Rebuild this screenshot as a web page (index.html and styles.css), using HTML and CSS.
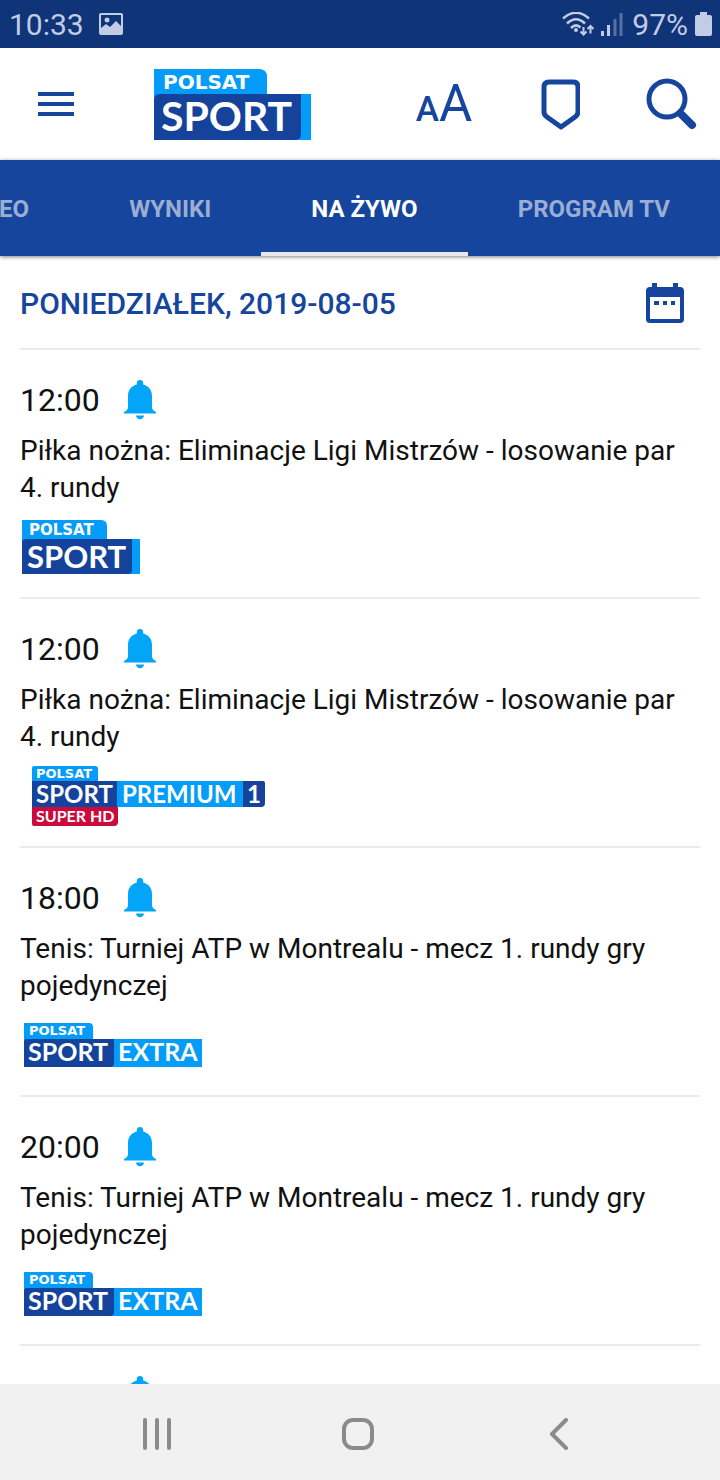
FILE: index.html
```html
<!DOCTYPE html>
<html lang="pl">
<head>
  <meta charset="UTF-8">
  <meta name="viewport" content="width=device-width, initial-scale=1.0">
  <title>Polsat Sport - Na żywo</title>
  <link rel="stylesheet" href="styles.css">
</head>
<body>

  <!-- Shared symbols -->
  <svg class="symbols" aria-hidden="true">
    <symbol id="bell" viewBox="0 0 32 40">
      <path d="M16 0c2 0 3.200 1.300 3.200 3v1.500C25 6 28 10.500 28 16v11c0 2.500 1.500 3.800 4 5v1.500H0V32c2.500-1.200 4-2.500 4-5V16C4 10.500 7 6 12.800 4.500V3C12.800 1.300 14 0 16 0z"/>
      <path d="M12 35.500h8c0 2-1.600 3.700-4 3.700s-4-1.700-4-3.700z"/>
    </symbol>
  </svg>

  <div class="status-bar">
    <span>10:33</span>
    <svg class="picture-icon" width="24" height="22" viewBox="0 0 24 22">
      <path fill-rule="evenodd" d="M2 0h20q2 0 2 2v18q0 2-2 2H2q-2 0-2-2V2q0-2 2-2zM2 2v13l5-4 4 3 6-6 5 5V2zM8 4.500a2.500 2.500 0 1 1 0 5 2.500 2.500 0 0 1 0-5z"/>
    </svg>
    <div class="status-right">
      <svg width="32" height="24" viewBox="0 0 32 24">
        <g fill="none" stroke="currentColor" stroke-width="2.500">
          <path d="M1 6.500Q14-5 27 6.500M5 11.500Q14 3 23 11.500M9 16Q14 11 18.500 15.500"/>
          <path stroke-width="2" d="M21.500 15v7M18.500 19.500l3 3 3-3M28.500 21.500v-7M25.500 17l3-3 3 3"/>
        </g>
        <circle cx="14" cy="18" r="2"/>
      </svg>
      <svg width="22" height="24" viewBox="0 0 22 24">
        <path d="M0 19h3v5H0zM6 13h3v11H6z"/>
        <path opacity="0.400" d="M12.500 7h3v17h-3zM18.500 1h3v23h-3z"/>
      </svg>
      <span class="percent">97%</span>
      <svg width="17" height="24" viewBox="0 0 17 24">
        <path d="M5 0h7v3h3q2 0 2 2v17q0 2-2 2H2q-2 0-2-2V5q0-2 2-2h3z"/>
      </svg>
    </div>
  </div>

  <header class="header">
    <button class="menu-button" aria-label="Menu">
      <svg width="36" height="24" viewBox="0 0 36 24"><path d="M0 0h36v4H0zM0 10h36v4H0zM0 20h36v4H0z"/></svg>
    </button>
    <a class="home-link" href="#" aria-label="Polsat Sport">
      <svg width="157" height="71" viewBox="0 0 157 71">
        <path class="light" d="M0 0h105q8 0 8 8v17h44v46H0z"/>
        <path class="dark" d="M6 25h141v40q0 6-6 6H0V31q0-6 6-6z"/>
        <text class="brand" x="9" y="20" font-size="20">POLSAT</text>
        <text class="name" x="7" y="62" font-size="41">SPORT</text>
      </svg>
    </a>
    <div class="actions">
      <button class="text-size" aria-label="Rozmiar tekstu"><span class="small-a">A</span><span class="big-a">A</span></button>
      <button aria-label="Kluby">
        <svg width="40" height="52" viewBox="0 0 40 52">
          <path fill="none" stroke="currentColor" stroke-width="5" stroke-linejoin="round" d="M9 4h24q5 0 5 5v25q0 3-3 5L21 49 7 39q-3-2-3-5V9q0-5 5-5z"/>
        </svg>
      </button>
      <button class="search-button" aria-label="Szukaj">
        <svg width="52" height="52" viewBox="0 0 52 52">
          <g fill="none" stroke="currentColor">
            <circle cx="21" cy="21" r="18" stroke-width="5"/>
            <path stroke-width="5" d="M33 34l4 4"/>
            <path stroke-width="8" stroke-linecap="round" d="M36 37l10 10"/>
          </g>
        </svg>
      </button>
    </div>
  </header>

  <nav class="tabs">
    <a class="tab" href="#">WIDEO</a>
    <a class="tab" href="#">WYNIKI</a>
    <a class="tab active" href="#">NA ŻYWO</a>
    <a class="tab" href="#">PROGRAM TV</a>
  </nav>

  <main class="schedule">
    <div class="date-row">
      <h1>PONIEDZIAŁEK, 2019-08-05</h1>
      <button aria-label="Wybierz datę">
        <svg width="38" height="40" viewBox="0 0 38 40">
          <path fill-rule="evenodd" d="M6 0h5v4h16V0h5v4h2q4 0 4 4v28q0 4-4 4H4q-4 0-4-4V8q0-4 4-4h2zM4 14v22h30V14z"/>
          <path d="M8 18h5v4H8zM17 18h4v4h-4zM25 18h4v4h-4z"/>
        </svg>
      </button>
    </div>

    <article class="event">
      <div class="event-time">
        <time>12:00</time>
        <button class="bell" aria-label="Przypomnij"><svg width="32" height="40"><use href="#bell"/></svg></button>
      </div>
      <p>Piłka nożna: Eliminacje Ligi Mistrzów - losowanie par 4. rundy</p>
      <div class="channel sport">
        <svg width="118" height="54" viewBox="0 0 118 54">
          <path class="light" d="M0 0h79q6 0 6 6v13h33v35H0z"/>
          <path class="dark" d="M4 19h106v31q0 4-4 4H0V23q0-4 4-4z"/>
          <text class="brand" x="7" y="15" font-size="15">POLSAT</text>
          <text class="name" x="5" y="48" font-size="31">SPORT</text>
        </svg>
      </div>
    </article>

    <article class="event">
      <div class="event-time">
        <time>12:00</time>
        <button class="bell" aria-label="Przypomnij"><svg width="32" height="40"><use href="#bell"/></svg></button>
      </div>
      <p>Piłka nożna: Eliminacje Ligi Mistrzów - losowanie par 4. rundy</p>
      <div class="channel premium">
        <svg width="233" height="60" viewBox="0 0 233 60">
          <path class="light" d="M2 0h61q3 0 3 3v12h148v26H0V2q0-2 2-2z"/>
          <path class="dark" d="M0 15h85v26H0zM211 15h20q2 0 2 2v20q0 4-4 4h-18z"/>
          <path class="red" d="M0 41h86v15q0 4-4 4H2q-2 0-2-2z"/>
          <text class="brand" x="4" y="12" font-size="13">POLSAT</text>
          <text class="name" x="4" y="37" font-size="24">SPORT</text>
          <text class="name" x="90" y="37" font-size="24">PREMIUM</text>
          <text class="name" x="215" y="37" font-size="24">1</text>
          <text class="name" x="4" y="56" font-size="16">SUPER HD</text>
        </svg>
      </div>
    </article>

    <article class="event">
      <div class="event-time">
        <time>18:00</time>
        <button class="bell" aria-label="Przypomnij"><svg width="32" height="40"><use href="#bell"/></svg></button>
      </div>
      <p>Tenis: Turniej ATP w Montrealu - mecz 1. rundy gry pojedynczej</p>
      <div class="channel extra">
        <svg width="178" height="44" viewBox="0 0 178 44">
          <path class="light" d="M0 0h65q4 0 4 4v12h109v28H0z"/>
          <path class="dark" d="M3 16h87v24q0 4-4 4H0V19q0-3 3-3z"/>
          <text class="brand" x="5" y="12" font-size="13">POLSAT</text>
          <text class="name" x="4" y="38" font-size="25">SPORT</text>
          <text class="name" x="94" y="38" font-size="25">EXTRA</text>
        </svg>
      </div>
    </article>

    <article class="event">
      <div class="event-time">
        <time>20:00</time>
        <button class="bell" aria-label="Przypomnij"><svg width="32" height="40"><use href="#bell"/></svg></button>
      </div>
      <p>Tenis: Turniej ATP w Montrealu - mecz 1. rundy gry pojedynczej</p>
      <div class="channel extra">
        <svg width="178" height="44" viewBox="0 0 178 44">
          <path class="light" d="M0 0h65q4 0 4 4v12h109v28H0z"/>
          <path class="dark" d="M3 16h87v24q0 4-4 4H0V19q0-3 3-3z"/>
          <text class="brand" x="5" y="12" font-size="13">POLSAT</text>
          <text class="name" x="4" y="38" font-size="25">SPORT</text>
          <text class="name" x="94" y="38" font-size="25">EXTRA</text>
        </svg>
      </div>
    </article>

    <article class="event">
      <div class="event-time">
        <button class="bell next" aria-label="Przypomnij"><svg width="32" height="40"><use href="#bell"/></svg></button>
      </div>
    </article>
  </main>

  <div class="system-nav">
    <button aria-label="Ostatnie">
      <svg width="30" height="32" viewBox="0 0 30 32"><path d="M3 2v28M15 2v28M27 2v28"/></svg>
    </button>
    <button aria-label="Ekran główny">
      <svg width="32" height="32" viewBox="0 0 32 32"><rect x="2" y="2" width="28" height="28" rx="9"/></svg>
    </button>
    <button aria-label="Wstecz">
      <svg width="20" height="32" viewBox="0 0 20 32"><path d="M17 2L3 16l14 14"/></svg>
    </button>
  </div>

</body>
</html>
```

FILE: styles.css
```css
* {
  box-sizing: border-box;
}

body {
  margin: 0;
  height: 100vh;
  display: flex;
  flex-direction: column;
  overflow: hidden;
  background-color: #fff;
  color: #111;
  font-family: Roboto, sans-serif;
}

button {
  display: flex;
  align-items: center;
  justify-content: center;
  padding: 0;
  border: none;
  background: none;
  color: #15459d;
  font-family: inherit;
  cursor: pointer;
}

svg {
  display: block;
  fill: currentColor;
}

.symbols {
  position: absolute;
  width: 0;
  height: 0;
}

/* Status bar */
.status-bar {
  flex: none;
  display: flex;
  align-items: center;
  height: 48px;
  padding: 0 8px 0 9px;
  background-color: #0f3477;
  color: #c3cce5;
  font-size: 30px;
}

.picture-icon {
  margin-left: 15px;
}

.status-right {
  display: flex;
  align-items: center;
  gap: 7px;
  margin-left: auto;
}

.percent {
  margin-left: 2px;
}

/* Header */
.header {
  flex: none;
  display: flex;
  align-items: center;
  height: 112px;
  padding: 0 14px 0 38px;
}

.home-link {
  margin-left: 80px;
}

.actions {
  display: flex;
  gap: 56px;
  margin-left: auto;
}

.actions button {
  width: 60px;
  height: 60px;
}

.actions .text-size {
  align-items: baseline;
}

.actions .search-button {
  justify-content: flex-start;
}

.small-a {
  font-size: 35px;
  font-weight: 500;
}

.big-a {
  font-size: 51px;
}

/* Channel logos */
.light {
  fill: #039cf8;
}

.dark {
  fill: #15439c;
}

.red {
  fill: #cc0a3c;
}

.brand {
  fill: #fff;
  font-family: "DejaVu Sans", sans-serif;
  font-weight: bold;
}

.name {
  fill: #fff;
  font-family: Lato, sans-serif;
  font-weight: bold;
}

/* Tabs */
.tabs {
  flex: none;
  position: relative;
  display: flex;
  justify-content: flex-end;
  height: 96px;
  background-color: #15459d;
  box-shadow: 0 1px 4px rgba(0, 0, 0, 0.5);
}

.tab {
  flex: none;
  padding: 0 50px;
  border-bottom: 4px solid transparent;
  color: #9aadd2;
  font-size: 24px;
  font-weight: bold;
  line-height: 98px;
  text-decoration: none;
}

.tab.active {
  border-color: #e8e8e8;
  color: #fff;
}

/* Schedule */
.schedule {
  flex: 1;
  min-height: 0;
  padding: 0 20px;
  overflow: hidden;
}

.date-row {
  display: flex;
  align-items: center;
  justify-content: space-between;
  height: 94px;
  padding: 2px 16px 0 0;
  border-bottom: 2px solid #ebebeb;
}

h1 {
  margin: 0;
  color: #15459d;
  font-size: 30px;
  font-weight: 500;
}

.event {
  padding: 28px 0 20px;
  border-bottom: 2px solid #ebebeb;
}

.event-time {
  display: flex;
  align-items: center;
  gap: 24px;
  height: 44px;
  font-size: 32px;
}

.bell {
  color: #03a5f9;
}

.bell.next {
  margin-left: 104px;
}

.event p {
  margin: 10px 0 11px;
  font-size: 28px;
  line-height: 37px;
}

.channel {
  display: flex;
  align-items: center;
  height: 60px;
}

.sport {
  padding-left: 2px;
}

.premium {
  padding-left: 12px;
}

.extra {
  padding-left: 4px;
}

/* System navigation */
.system-nav {
  flex: none;
  display: flex;
  height: 96px;
  padding: 4px 60px 0 56px;
  background-color: #f1f1f1;
}

.system-nav button {
  flex: 1;
  color: #8b8b8b;
}

.system-nav svg {
  fill: none;
  stroke: currentColor;
  stroke-width: 4;
  stroke-linecap: round;
  stroke-linejoin: round;
}
```
